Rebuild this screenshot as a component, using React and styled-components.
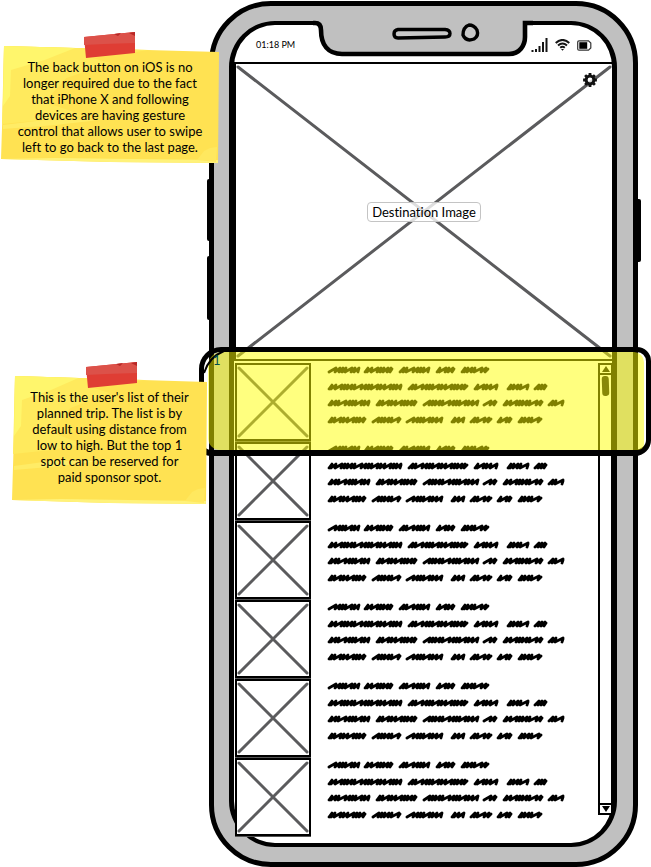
import React from "react";
import styled, { createGlobalStyle } from "styled-components";

const Global = createGlobalStyle`
  *, *::before, *::after { box-sizing: border-box; }
  body {
    margin: 0;
    background: #fff;
    color: #000;
    font-family: Lato, "Open Sans", sans-serif;
    font-variant-ligatures: none;
  }
`;

const Board = styled.main`
  position: relative;
  padding: 1px 13px 0 209px;
  overflow: hidden;
`;

const Phone = styled.section`
  position: relative;
  padding: 15px;
  border: 5px solid #000;
  border-radius: 62px;
  background: #c0c0c0;
`;

const SideKey = styled.span`
  position: absolute;
  width: 6px;
  top: ${(p) => p.$top}px;
  height: ${(p) => p.$height}px;
  ${(p) => (p.$side === "left" ? "left: -7px;" : "right: -8px;")}
  background: #000;
  border-radius: 2px;
`;

const Screen = styled.div`
  position: relative;
  margin: 0 1px 0 0;
  border: 5px solid #000;
  border-top-width: 4px;
  border-bottom-width: 4px;
  border-radius: 46px;
  background: #fff;
  padding-bottom: 6px;
`;

const Notch = styled.svg`
  position: absolute;
  left: 50%;
  top: -9px;
  width: 220px;
  height: 42px;
  margin-left: -110px;
`;

const StatusBar = styled.header`
  display: flex;
  align-items: center;
  justify-content: space-between;
  height: 37px;
  padding: 3px 20px 0 22px;
`;

const Clock = styled.time`
  font-size: 9px;
  line-height: 12px;
`;

const StatusIcons = styled.div`
  display: flex;
  align-items: center;
  gap: 7px;
`;

const Hero = styled.div`
  position: relative;
  display: flex;
  align-items: center;
  justify-content: center;
  height: 299px;
  border: 2px solid #000;
  border-right-width: 0;
`;

const CrossSvg = styled.svg`
  position: absolute;
  inset: 0;
  width: 100%;
  height: 100%;
`;

const HeroLabel = styled.span`
  position: relative;
  padding: 0 4px;
  border: 1px solid #c4c4c4;
  border-radius: 4px;
  background: rgba(255, 255, 255, 0.8);
  font-size: 13px;
  line-height: 18px;
`;

const SettingsButton = styled.button`
  position: absolute;
  top: 9px;
  right: 15px;
  display: flex;
  padding: 0;
  border: 0;
  background: none;
`;

const ListArea = styled.div`
  display: flex;
  align-items: flex-start;
  padding-top: 2px;
`;

const Trips = styled.ul`
  flex: 1;
  min-width: 0;
  margin: 0;
  padding: 0 0 0 1px;
  list-style: none;
`;

const Trip = styled.li`
  display: flex;
  gap: 16px;
  height: 79px;
`;

const Thumb = styled.div`
  position: relative;
  flex: none;
  width: 76px;
  height: 78px;
  border: 2px solid #000;
  background: #fff;
  box-shadow: 0 1px 0 #555;
`;

const Scribble = styled.svg`
  flex: none;
  width: 242px;
  height: 70px;
`;

const ScrollBar = styled.div`
  display: flex;
  flex-direction: column;
  width: 15px;
  height: 452px;
  margin-right: -1px;
  border: 2px solid #000;
`;

const ScrollButton = styled.button`
  display: flex;
  align-items: center;
  justify-content: center;
  height: 10px;
  padding: 0;
  border: 0 solid #000;
  border-top-width: ${(p) => (p.$down ? 2 : 0)}px;
  border-bottom-width: ${(p) => (p.$down ? 0 : 2)}px;
  background: #fff;
`;

const Track = styled.div`
  flex: 1;
  padding: 1px 2px;
`;

const Handle = styled.div`
  height: 20px;
  border-radius: 3px;
  background: #111;
  transform: rotate(-2deg);
`;

const Highlight = styled.div`
  position: absolute;
  left: 199px;
  right: 0;
  top: 347px;
  height: 109px;
  border: 5px solid #000;
  border-bottom-width: 6px;
  border-radius: 22px 14px 16px 12px;
`;

const Tint = styled.div`
  position: absolute;
  inset: 0 2px 0 4px;
  border-radius: 14px 10px 6px 12px;
  background: rgba(255, 255, 0, 0.5);
`;

const CornerStroke = styled.svg`
  position: absolute;
  left: -2px;
  top: -3px;
  width: 26px;
  height: 30px;
`;

const Marker = styled.span`
  position: absolute;
  left: 9px;
  top: 0;
  color: #004d4d;
  font-size: 13px;
  line-height: 16px;
`;

const Note = styled.aside`
  position: absolute;
  left: ${(p) => p.$left}px;
  top: ${(p) => p.$top}px;
  width: ${(p) => p.$width}px;
  height: ${(p) => p.$height}px;
  padding-top: 27px;
  text-align: center;
  font-size: 13px;
  line-height: 16px;
`;

const NoteArt = styled.svg`
  position: absolute;
  inset: 0;
  width: 100%;
  height: 100%;
`;

const NoteText = styled.p`
  position: relative;
  margin: 0;
  white-space: pre-line;
`;

const Cross = ({ w, h }) => (
  <CrossSvg viewBox={`0 0 ${w} ${h}`} preserveAspectRatio="none" aria-hidden="true">
    <path
      d={`M2 3L${w - 2} ${h - 3}M${w - 2} 3L2 ${h - 3}`}
      stroke="#5b5b5d"
      strokeWidth="3"
      strokeLinecap="round"
      vectorEffect="non-scaling-stroke"
    />
  </CrossSvg>
);

const scribbleLines = [
  { y: 7, words: [[0, 33], [36, 67], [71, 103], [108, 129], [133, 163]] },
  { y: 24, words: [[0, 76], [80, 142], [146, 172], [179, 203], [206, 221]] },
  { y: 40, words: [[0, 44], [48, 91], [95, 152], [155, 171], [175, 217], [220, 238]] },
  { y: 57, words: [[0, 40], [44, 75], [78, 116], [123, 138], [142, 166], [169, 186], [190, 216]] },
];

const steps = [3, 4, 6, 3, 3, 4, 3, 7, 4, 3, 3, 6];

const scribblePath = (y, words) =>
  words
    .map(([start, end], n) => {
      let x = start + 2;
      let d = `M${x} ${y + 2}`;
      let i = n * 5 + y;
      while (x < end - 4) {
        const step = steps[i % steps.length];
        const peak = Math.min(x + step, end - 1);
        d += `L${peak} ${y - 2}L${peak - 1} ${y + 2}`;
        x += step;
        i += 1;
      }
      return `${d}L${end - 2} ${y - 1}`;
    })
    .join("");

const ScribbleText = () => (
  <Scribble viewBox="0 0 242 70" role="img" aria-label="Trip details">
    {scribbleLines.map(({ y, words }) => (
      <path
        key={y}
        d={scribblePath(y, words)}
        fill="none"
        stroke="#000"
        strokeWidth="2.8"
        strokeLinejoin="round"
        strokeLinecap="round"
      />
    ))}
  </Scribble>
);

const StickyNote = ({ tape, children, ...place }) => {
  const { $width: w, $height: h } = place;
  return (
    <Note {...place}>
      <NoteArt viewBox={`0 0 ${w} ${h}`} aria-hidden="true">
        <path d={`M3 14L${w} 20L${w - 1} ${h}L${w * 0.5} ${h - 1}L0 ${h - 4}L2 ${h * 0.5}Z`} fill="#ffe252" />
        <path d={`M3 14L${w * 0.68} 18L${w * 0.42} 26L${w * 0.5} 31L${w * 0.3} 46L${w * 0.2} 70L${w * 0.36} 82L${w * 0.2} 88L1 92Z`} fill="#ffea5d" />
        <path d={`M3 14L${w * 0.34} 16L${w * 0.2} 28L10 38L9 64L2 74Z`} fill="#fff66c" />
        <path d={`M2 ${h - 34}L${w * 0.25} ${h - 38}L${w * 0.45} ${h - 43}L${w * 0.2} ${h - 43}L2 ${h - 38}Z`} fill="#ffec66" />
        <path d={`M0 ${h - 4}L${w * 0.5} ${h - 1}L${w - 1} ${h}V${h - 3}L${w * 0.6} ${h - 4}L${w * 0.25} ${h - 5}Z`} fill="#fff27a" />
        <path d={`M${w - 22} ${h - 3}l7-9 6-3 7-1-1 15Z`} fill="#ffe85f" />
        <path d={`M${tape} 5L${tape + 51} 0L${tape + 51} 21L${tape + 2} 26Z`} fill="#df3d34" />
        <path d={`M${tape} 5L${tape + 51} 0V11L${tape + 20} 12L${tape} 13Z`} fill="#dc5149" />
        <path d={`M${tape + 30} 2l7-1-3 3ZM${tape + 45} 1l6-1v4Z`} fill="#b82725" />
      </NoteArt>
      <NoteText>{children}</NoteText>
    </Note>
  );
};

const SignalIcon = () => (
  <svg width="17" height="14" viewBox="0 0 17 14" aria-hidden="true">
    <path d="M1.5 12v2M5 11v3M8.5 8v6M12 4v10M15.5 0v14" stroke="#151515" strokeWidth="2" />
  </svg>
);

const WifiIcon = () => (
  <svg width="15" height="12" viewBox="0 0 15 12" fill="none" stroke="#151515" aria-hidden="true">
    <path d="M0.7 4Q7.5-2.2 14.3 4M3 6.5Q7.5 2.3 12 6.5M5.2 8.7Q7.5 6.6 9.8 8.7" strokeWidth="1.9" />
    <path d="M6 10l1.5 1.7L9 10Z" fill="#151515" stroke="none" />
  </svg>
);

const BatteryIcon = () => (
  <svg width="15" height="11" viewBox="0 0 15 11" aria-hidden="true">
    <path d="M2 .8H11.5L13.8 3V8L11.5 10.2H2Q.7 10.2.7 9V2Q.7.8 2 .8Z" fill="#fff" stroke="#333" strokeWidth="1.2" />
    <path d="M2.3 2.2H10.2V8.8H2.3Z" fill="#000" />
  </svg>
);

const GearIcon = () => (
  <svg width="14" height="14" viewBox="-7 -7 14 14" aria-hidden="true">
    <circle r="3.9" fill="#fff" fillOpacity=".75" stroke="#111" strokeWidth="3" />
    {[0, 45, 90, 135].map((a) => (
      <path key={a} d="M0-6.9V-4M0 4V6.9" transform={`rotate(${a})`} stroke="#111" strokeWidth="2.8" />
    ))}
  </svg>
);

export default function App() {
  return (
    <>
      <Global />
      <Board>
        <Phone>
          <SideKey $side="left" $top={173} $height={62} />
          <SideKey $side="left" $top={250} $height={64} />
          <SideKey $side="right" $top={193} $height={63} />
          <Screen>
            <Notch viewBox="0 0 220 42" aria-hidden="true">
              <path d="M0 5H2Q8 5 8 13C8 28 15 37 29 38H196C207 38 212 29 212 21V5H220V0H0Z" fill="#c0c0c0" />
              <path
                d="M0 7H2Q8 7 8 14C8 29 15 38 29 38H196C207 38 212 29 212 21V7H220"
                fill="none"
                stroke="#000"
                strokeWidth="4.6"
              />
              <path d="M85 13.5H132Q137 14 137 17.5T132 21L85 22Q81 22 81 18T85 13.5Z" fill="#c8c8c8" stroke="#000" strokeWidth="3.4" />
              <path d="M156 9Q161 9 164 14Q166 20 161 23Q153 26 150 19Q150 11 156 9Z" fill="#c8c8c8" stroke="#000" strokeWidth="3.4" />
            </Notch>
            <StatusBar>
              <Clock>01:18 PM</Clock>
              <StatusIcons>
                <SignalIcon />
                <WifiIcon />
                <BatteryIcon />
              </StatusIcons>
            </StatusBar>
            <Hero>
              <Cross w={375} h={295} />
              <HeroLabel>Destination Image</HeroLabel>
              <SettingsButton aria-label="Settings">
                <GearIcon />
              </SettingsButton>
            </Hero>
            <ListArea>
              <Trips>
                {[1, 2, 3, 4, 5, 6].map((id) => (
                  <Trip key={id}>
                    <Thumb>
                      <Cross w={72} h={74} />
                    </Thumb>
                    <ScribbleText />
                  </Trip>
                ))}
              </Trips>
              <ScrollBar>
                <ScrollButton aria-label="Scroll up">
                  <svg width="8" height="6" viewBox="0 0 8 6">
                    <path d="M4 0L8 6H0Z" />
                  </svg>
                </ScrollButton>
                <Track>
                  <Handle />
                </Track>
                <ScrollButton $down aria-label="Scroll down">
                  <svg width="8" height="6" viewBox="0 0 8 6">
                    <path d="M0 0H8L4 6Z" />
                  </svg>
                </ScrollButton>
              </ScrollBar>
            </ListArea>
          </Screen>
        </Phone>
        <Highlight>
          <Tint />
          <CornerStroke viewBox="0 0 26 30" aria-hidden="true">
            <path d="M2 24Q7 8 22 2" fill="none" stroke="#000" strokeWidth="2" />
          </CornerStroke>
          <Marker>1</Marker>
        </Highlight>
        <StickyNote $left={1} $top={32} $width={218} $height={131} tape={83}>
          {`The back button on iOS is no
          longer required due to the fact
          that iPhone X and following
          devices are having gesture
          control that allows user to swipe
          left to go back to the last page.`}
        </StickyNote>
        <StickyNote $left={12} $top={362} $width={195} $height={142} tape={74}>
          {`This is the user's list of their
          planned trip. The list is by
          default using distance from
          low to high. But the top 1
          spot can be reserved for
          paid sponsor spot.`}
        </StickyNote>
      </Board>
    </>
  );
}
